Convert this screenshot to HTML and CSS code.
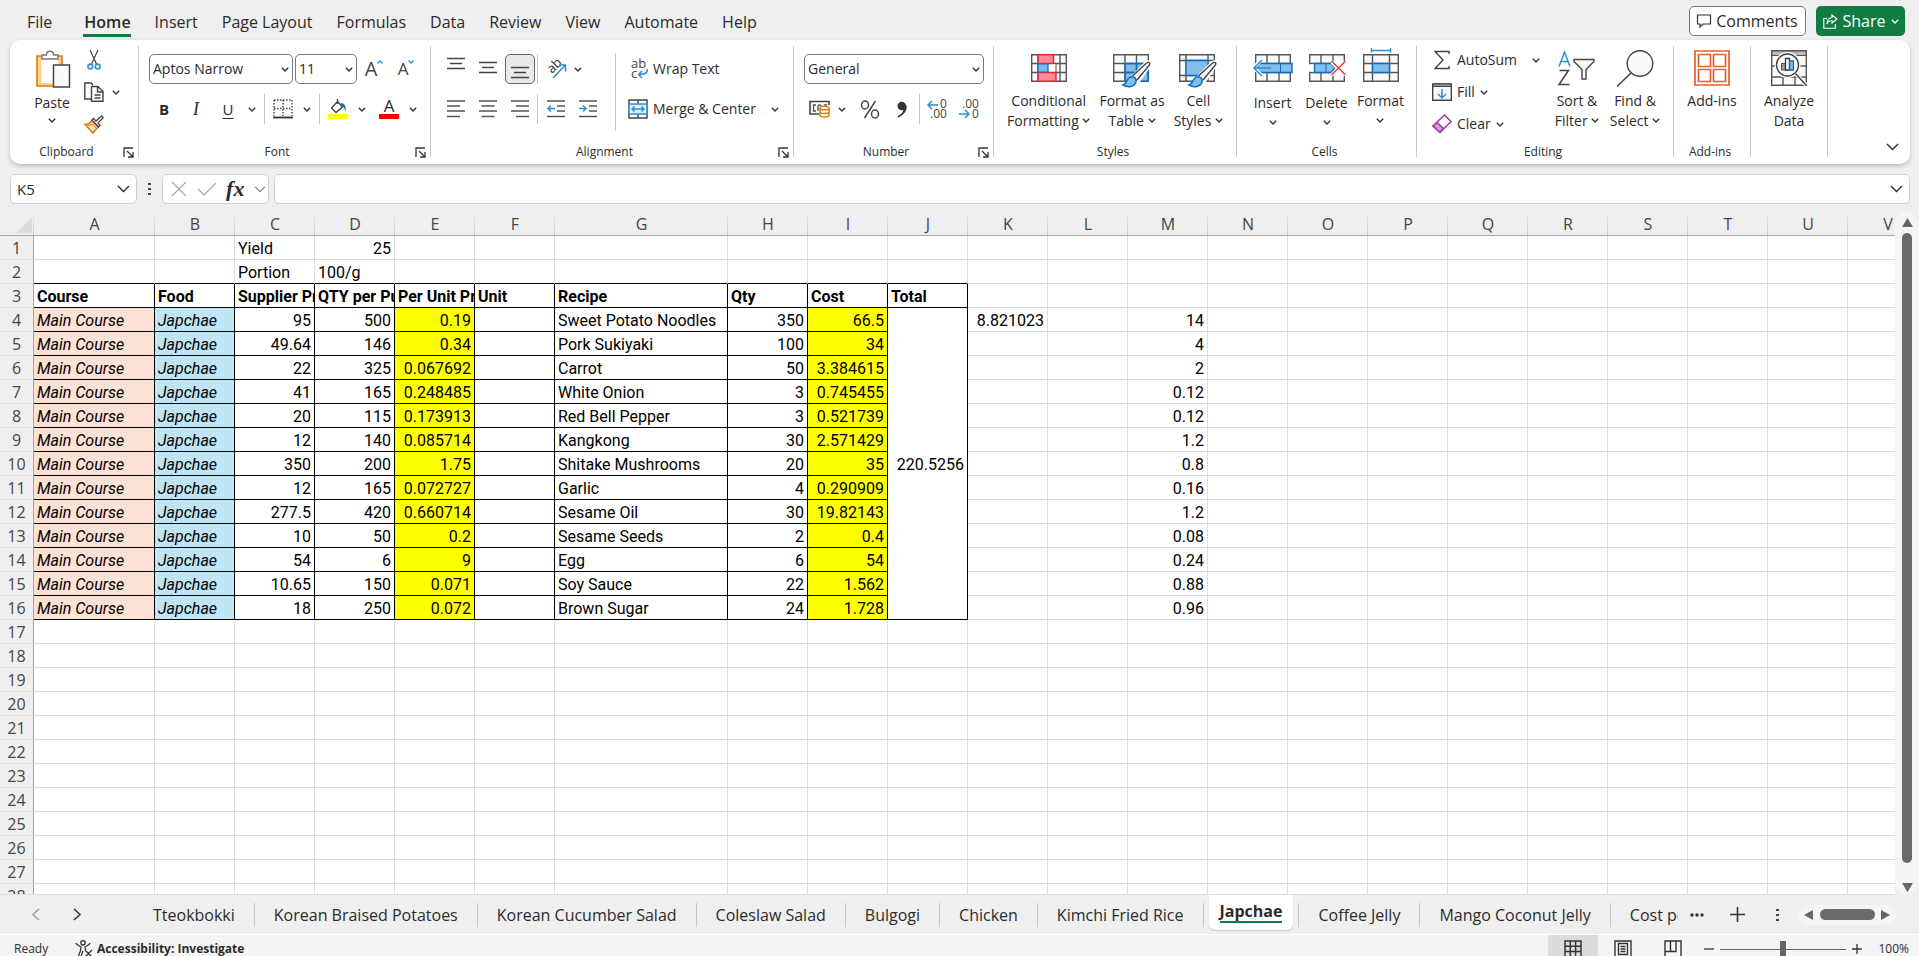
FILE: index.html
```
<!DOCTYPE html>
<html lang="en">
<head>
    <meta charset="utf-8">
    <title>Costing - Japchae</title>
    <link rel="stylesheet" href="styles.css">
</head>
<body>
    <!-- shared glyphs -->
    <svg class="defs" width="0" height="0">
        <symbol id="chev" viewBox="0 0 8 5"><path d="M.8.8 4 4 7.2.8" fill="none" stroke="#333" stroke-width="1.4"/></symbol>
        <symbol id="chev-big" viewBox="0 0 13 8"><path d="M1 1l5.5 5.5L12 1" fill="none" stroke="currentColor" stroke-width="1.4"/></symbol>
        <symbol id="launcher" viewBox="0 0 11 11"><path d="M1 10V1h9M4 4l5.5 5.5M10 5v5H5" fill="none" stroke="#333" stroke-width="1.3"/></symbol>
    </svg>

    <header class="menu">
        <nav class="menu-tabs">
            <button class="file">File</button>
            <button class="active">Home</button>
            <button>Insert</button>
            <button>Page Layout</button>
            <button>Formulas</button>
            <button>Data</button>
            <button>Review</button>
            <button>View</button>
            <button>Automate</button>
            <button>Help</button>
        </nav>
        <button class="comments">
            <svg width="14" height="14" viewBox="0 0 14 14"><path d="M.5 1h13v9H6l-3 3v-3H.5z" fill="none" stroke="#333" stroke-width="1.2"/></svg>
            Comments
        </button>
        <button class="share">
            <svg width="15" height="15" viewBox="0 0 15 15"><path d="M4 4.500H.8v9.700h11.500V10M9 1l5 4-5 4V6.500C6.500 6.500 5 7.500 4 10c0-4 2-6.500 5-6.500z" fill="none" stroke="#fff" stroke-width="1.1"/></svg>
            Share
            <svg width="8" height="5" viewBox="0 0 8 5"><path d="M.8.8 4 4 7.2.8" fill="none" stroke="#fff" stroke-width="1.3"/></svg>
        </button>
    </header>

    <section class="ribbon">
        <div class="group clipboard">
            <div class="body">
                <button class="big low">
                    <svg width="36" height="38" viewBox="0 0 36 38">
                        <path d="M3 6h25v30H3z" fill="#fbd38b" stroke="#e07b10" stroke-width="1.6"/><path d="M7 9h17v24H7z" fill="#fff"/>
                        <path d="M8 9V5h4.500c0-5 7-5 7 0H24v4z" fill="#fff" stroke="#777" stroke-width="1.4"/>
                        <path d="M19.500 15h16v22h-16z" fill="#fafafa" stroke="#444" stroke-width="1.5"/>
                    </svg>
                    <span>Paste</span>
                    <svg class="chev"><use href="#chev"/></svg>
                </button>
                <div class="stack">
                    <button aria-label="Cut"><svg width="14" height="20" viewBox="0 0 14 20"><path d="M3 0l6.500 14M11 0L4.500 14" stroke="#444" stroke-width="1.2"/><g fill="none" stroke="#2b8fd0" stroke-width="1.6"><circle cx="3.300" cy="16.500" r="2.400"/><circle cx="10.700" cy="16.500" r="2.400"/></g></svg></button>
                    <button aria-label="Copy"><svg width="20" height="20" viewBox="0 0 20 20"><path d="M7 17H.8V1H7l2 2M7.500 4.500H14l5 5v9.700H7.500zM13.500 5v5H19M10.500 13h6M10.500 16h6" fill="none" stroke="#444" stroke-width="1.4"/></svg><svg class="chev"><use href="#chev"/></svg></button>
                    <button aria-label="Format Painter"><svg width="20" height="19" viewBox="0 0 20 19"><path d="M1 9.500c3 0 5-1 7-4l6 6.500-5 6z" fill="#fde3c0" stroke="#e07b10" stroke-width="1.5"/><path d="M3.500 11l5-2 4 4.500" fill="none" stroke="#e07b10"/><path d="M8 5l1.500-1.500L12 6l5.500-5 1.700 1.700L14 8l2 2.500-1.500 1.500z" fill="#fff" stroke="#444" stroke-width="1.3"/></svg></button>
                </div>
            </div>
            <div class="caption"><span>Clipboard</span><svg class="launcher"><use href="#launcher"/></svg></div>
        </div>

        <div class="group font">
            <div class="rows">
                <div class="row">
                    <label class="combo wide"><select aria-label="Font"><option>Aptos Narrow</option></select><svg class="chev"><use href="#chev"/></svg></label>
                    <label class="combo size"><select aria-label="Font size"><option>11</option></select><svg class="chev"><use href="#chev"/></svg></label>
                    <button class="tool letter big-a">A<svg width="6" height="4" viewBox="0 0 6 4"><path d="M.5 3.500 3 1l2.500 2.500" fill="none" stroke="#2b8fd0" stroke-width="1.3"/></svg></button>
                    <button class="tool letter small-a">A<svg width="6" height="4" viewBox="0 0 6 4"><path d="M.5.5 3 3 5.500.5" fill="none" stroke="#2b8fd0" stroke-width="1.3"/></svg></button>
                </div>
                <div class="row">
                    <button class="tool bold">B</button>
                    <button class="tool italic">I</button>
                    <button class="tool underline">U</button>
                    <button class="drop" aria-label="Underline style"><svg class="chev"><use href="#chev"/></svg></button>
                    <i class="sep"></i>
                    <button class="tool" aria-label="Borders"><svg width="20" height="20" viewBox="0 0 20 20"><path d="M1 1h18M1 1v16M19 1v16M10 1v16M1 9.500h18" fill="none" stroke="#444" stroke-width="1.4" stroke-dasharray="1.500 1.500"/><path d="M0 18.500h20" stroke="#333" stroke-width="1.8"/></svg></button>
                    <button class="drop" aria-label="Border style"><svg class="chev"><use href="#chev"/></svg></button>
                    <i class="sep"></i>
                    <button class="tool" aria-label="Fill color"><svg width="20" height="20" viewBox="0 0 20 20"><path d="M9.500 2.500l5 5.500-6.500 5.500L3.500 9zM9.500 5V0" fill="#fafafa" stroke="#444" stroke-width="1.4"/><path d="M12.500 4c4 0 6 3 5 8.500-1.500-3-1-4.500-3-4.500z" fill="#1f6fb8"/><path d="M0 15h20v5H0z" fill="#ff0"/></svg></button>
                    <button class="drop" aria-label="Fill colors"><svg class="chev"><use href="#chev"/></svg></button>
                    <button class="tool font-color" aria-label="Font color"><span>A</span></button>
                    <button class="drop" aria-label="Font colors"><svg class="chev"><use href="#chev"/></svg></button>
                </div>
            </div>
            <div class="caption"><span>Font</span><svg class="launcher"><use href="#launcher"/></svg></div>
        </div>

        <div class="group alignment">
            <div class="split">
                <div class="rows">
                    <div class="row">
                        <button class="tool" aria-label="Top align"><svg width="18" height="24" viewBox="0 0 18 24"><path d="M0 1.500h18M3 6.500h12M0 11.500h18" stroke="#444" stroke-width="1.5"/></svg></button>
                        <button class="tool" aria-label="Middle align"><svg width="18" height="24" viewBox="0 0 18 24"><path d="M0 5.500h18M3 10.500h12M0 15.500h18" stroke="#444" stroke-width="1.5"/></svg></button>
                        <button class="tool pressed" aria-label="Bottom align"><svg width="18" height="24" viewBox="0 0 18 24"><path d="M0 10.500h18M3 15.500h12M0 20.500h18" stroke="#444" stroke-width="1.5"/></svg></button>
                        <i class="sep"></i>
                        <button class="tool" aria-label="Orientation"><svg width="20" height="20" viewBox="0 0 20 20"><text transform="translate(6 15) rotate(-45)" font-size="13" fill="#333">ab</text><path d="M7 19L19 6.500M13 6h6.500v6.500" fill="none" stroke="#2b8fd0" stroke-width="1.5"/></svg></button>
                        <button class="drop" aria-label="Orientation options"><svg class="chev"><use href="#chev"/></svg></button>
                    </div>
                    <div class="row">
                        <button class="tool" aria-label="Align left"><svg width="18" height="18" viewBox="0 0 18 18"><path d="M0 1h18M0 6h13M0 11h18M0 16.500h13" stroke="#555" stroke-width="1.6"/></svg></button>
                        <button class="tool" aria-label="Center"><svg width="18" height="18" viewBox="0 0 18 18"><path d="M0 1h18M2.500 6h13M0 11h18M2.500 16.500h13" stroke="#555" stroke-width="1.6"/></svg></button>
                        <button class="tool" aria-label="Align right"><svg width="18" height="18" viewBox="0 0 18 18"><path d="M0 1h18M5 6h13M0 11h18M5 16.500h13" stroke="#555" stroke-width="1.6"/></svg></button>
                        <i class="sep"></i>
                        <button class="tool" aria-label="Decrease indent"><svg width="18" height="18" viewBox="0 0 18 18"><path d="M0 1h18M10 6h8M10 11h8M0 16.500h18" stroke="#555" stroke-width="1.6"/><path d="M8 8.500H1M4 5.500l-3 3 3 3" fill="none" stroke="#2b8fd0" stroke-width="1.5"/></svg></button>
                        <button class="tool" aria-label="Increase indent"><svg width="18" height="18" viewBox="0 0 18 18"><path d="M0 1h18M10 6h8M10 11h8M0 16.500h18" stroke="#555" stroke-width="1.6"/><path d="M0 8.500h7M4 5.500l3 3-3 3" fill="none" stroke="#2b8fd0" stroke-width="1.5"/></svg></button>
                    </div>
                </div>
                <i class="sep tall"></i>
                <div class="rows">
                    <div class="row">
                        <button class="text-tool"><svg width="20" height="20" viewBox="0 0 20 20"><text x="3" y="9" font-size="13" fill="#444">ab</text><text x="3" y="19" font-size="13" fill="#444">c</text><path d="M19 10c1 4-2 5.500-8 5.500M14 12l-3.500 3.500L14 19" fill="none" stroke="#2b8fd0" stroke-width="1.5"/></svg>Wrap Text</button>
                    </div>
                    <div class="row">
                        <button class="text-tool"><svg width="20" height="20" viewBox="0 0 20 20"><path d="M1 1h18v18H1zM10 1v4M10 15v4" fill="none" stroke="#444" stroke-width="1.5"/><path d="M1 5h18v10H1z" fill="#dceefb" stroke="#2b8fd0" stroke-width="1.5"/><path d="M4 10h12M6.500 7.500L4 10l2.500 2.500M13.500 7.500L16 10l-2.500 2.500" fill="none" stroke="#2b8fd0" stroke-width="1.4"/></svg>Merge &amp; Center</button>
                        <button class="drop merge-drop" aria-label="Merge options"><svg class="chev"><use href="#chev"/></svg></button>
                    </div>
                </div>
            </div>
            <div class="caption"><span>Alignment</span><svg class="launcher"><use href="#launcher"/></svg></div>
        </div>

        <div class="group number">
            <div class="rows">
                <div class="row">
                    <label class="combo full"><select aria-label="Number format"><option>General</option></select><svg class="chev"><use href="#chev"/></svg></label>
                </div>
                <div class="row">
                    <button class="tool" aria-label="Accounting format"><svg width="21" height="18" viewBox="0 0 21 18"><path d="M10 14H1V1.500h19V5" fill="none" stroke="#444" stroke-width="1.6"/><path d="M7 5H4.500v6H7M9 11V6.500C9 4.500 12 4.500 12 6.500M15 5h3" fill="none" stroke="#555" stroke-width="1.4"/><path d="M11 8v7.500c0 2 9 2 9 0V8" fill="#fff" stroke="#e07b10" stroke-width="1.5"/><ellipse cx="15.500" cy="8" rx="4.500" ry="1.800" fill="#fff" stroke="#e07b10" stroke-width="1.5"/><path d="M11 12c0 2 9 2 9 0" fill="none" stroke="#e07b10" stroke-width="1.4"/></svg></button>
                    <button class="drop" aria-label="Accounting options"><svg class="chev"><use href="#chev"/></svg></button>
                    <button class="tool" aria-label="Percent style"><svg width="20" height="19" viewBox="0 0 20 19"><g fill="none" stroke="#444" stroke-width="1.5"><ellipse cx="5" cy="5" rx="3.500" ry="4"/><ellipse cx="15" cy="14" rx="3.500" ry="4"/><path d="M15.500 1l-11 17"/></g></svg></button>
                    <button class="tool" aria-label="Comma style"><svg width="10" height="17" viewBox="0 0 10 17"><circle cx="4.800" cy="5" r="4.300" fill="#333"/><path d="M9 4.500c.5 6-3 9-8 11.500" fill="none" stroke="#333" stroke-width="1.5"/><path d="M9.100 5c0 4-2 8-7 10 3-2.500 4-4 4-6z" fill="#333"/></svg></button>
                    <i class="sep"></i>
                    <button class="tool" aria-label="Increase decimal"><svg width="20" height="20" viewBox="0 0 20 20"><path d="M11 6H1M5 2L1 6l4 4" fill="none" stroke="#2b8fd0" stroke-width="1.5"/><text x="13" y="9" font-size="12" fill="#444">0</text><text x="3" y="19" font-size="12" fill="#444">.00</text></svg></button>
                    <button class="tool" aria-label="Decrease decimal"><svg width="20" height="20" viewBox="0 0 20 20"><path d="M0 15h10M6 11l4 4-4 4" fill="none" stroke="#2b8fd0" stroke-width="1.5"/><text x="3" y="9" font-size="12" fill="#444">.00</text><text x="13" y="19" font-size="12" fill="#444">0</text></svg></button>
                </div>
            </div>
            <div class="caption"><span>Number</span><svg class="launcher"><use href="#launcher"/></svg></div>
        </div>

        <div class="group styles">
            <div class="body">
                <button class="big">
                    <svg width="36" height="38" viewBox="0 0 36 38"><path d="M.7 4.700h34.600v26.600H.7zM.7 13.500h34.600M.7 22.500h34.600M7 4.700v26.600M29 4.700v26.600" fill="#fafafa" stroke="#555" stroke-width="1.4"/><path d="M18 13.500h7v9h-7" fill="#fff" stroke="#555"/><path d="M7 4.700h15.500v8.800H7zM7 22.500h18v8.800H7z" fill="#ff8a8f" stroke="#e0262c" stroke-width="1.4"/><path d="M7 14h10v8H7z" fill="#7ab8ea" stroke="#0f6cbd" stroke-width="1.2"/></svg>
                    <span>Conditional<br>Formatting <svg class="chev"><use href="#chev"/></svg></span>
                </button>
                <button class="big">
                    <svg width="38" height="38" viewBox="0 0 38 38"><path d="M.7 4.700h34.600v26.600H.7z" fill="#fafafa"/><path d="M12 13.500h23.300v17.800H12z" fill="#83bdec"/><path d="M.7 4.700h34.600v26.600H.7zM.7 13.500h34.600M.7 22.500h34.600M12 4.700v26.600M23.500 4.700v26.600" fill="none" stroke="#555" stroke-width="1.4"/><path d="M12 13.500h23.300v17.800H12zM12 22.500h23.300M23.500 13.500v17.800" fill="none" stroke="#0f6cbd" stroke-width="1.3"/><path d="M20 27L33 13.500c3-2.500 5-1 3 2L25 31z" fill="#fff" stroke="#fff" stroke-width="4"/><path d="M19.500 26L33 13.500c3-2 5-1 3 2L24 30" fill="#fff" stroke="#444" stroke-width="1.4"/><path d="M10 35c4-1 3-5 6-7 4-3 8 0 7 4-1.500 5-8 6-13 3z" fill="#83bdec" stroke="#0f6cbd" stroke-width="1.5"/></svg>
                    <span>Format as<br>Table <svg class="chev"><use href="#chev"/></svg></span>
                </button>
                <button class="big">
                    <svg width="38" height="38" viewBox="0 0 38 38"><path d="M.7 4.700h34.600v26.600H.7zM.7 10.500h34.600M.7 25.500h34.600M7 4.700v26.600M29 4.700v26.600" fill="#fafafa" stroke="#555" stroke-width="1.4"/><path d="M7 10.500h22v15H7z" fill="#83bdec" stroke="#0f6cbd" stroke-width="1.3"/><path d="M20 27L33 13.500c3-2.500 5-1 3 2L25 31z" fill="#fff" stroke="#fff" stroke-width="4"/><path d="M19.500 26L33 13.500c3-2 5-1 3 2L24 30" fill="#fff" stroke="#444" stroke-width="1.4"/><path d="M10 35c4-1 3-5 6-7 4-3 8 0 7 4-1.500 5-8 6-13 3z" fill="#83bdec" stroke="#0f6cbd" stroke-width="1.5"/></svg>
                    <span>Cell<br>Styles <svg class="chev"><use href="#chev"/></svg></span>
                </button>
            </div>
            <div class="caption"><span>Styles</span></div>
        </div>

        <div class="group cells">
            <div class="body">
                <button class="big low">
                    <svg width="40" height="38" viewBox="0 0 40 38"><path d="M2.700 4.700h34.600v26.600H2.700zM2.700 13.500h34.600M2.700 22.500h34.600M14 4.700v26.600M26 4.700v26.600" fill="#fafafa" stroke="#555" stroke-width="1.4"/><path d="M5 13.500h34v9H5z" fill="#83bdec" stroke="#0f6cbd" stroke-width="1.4"/><path d="M27.500 13.500v9" stroke="#0f6cbd"/><path d="M9 9L1 17.500 9 26" fill="none" stroke="#fff" stroke-width="4"/><path d="M18 18H1M9 10L1 18l8 8" fill="none" stroke="#2b8fd0" stroke-width="1.5"/></svg>
                    <span>Insert<br><svg class="chev"><use href="#chev"/></svg></span>
                </button>
                <button class="big low">
                    <svg width="40" height="38" viewBox="0 0 40 38"><path d="M2.700 4.700h34.600v26.600H2.700zM2.700 13.500h34.600M2.700 22.500h34.600M14 4.700v26.600M26 4.700v26.600" fill="#fafafa" stroke="#555" stroke-width="1.4"/><path d="M0 14.200h6.500v7.600H0zM28 11h12v15H28z" fill="#fff"/><path d="M7.500 13.500H24l4 4.500-4 4.500H7.500z" fill="#83bdec" stroke="#0f6cbd" stroke-width="1.4"/><path d="M19 13.500v9" stroke="#0f6cbd"/><path d="M25 12l13 13M38 12L25 25" stroke="#fff" stroke-width="4"/><path d="M24.500 11l14 14M38.500 11l-14 14" stroke="#ee4247" stroke-width="1.6"/></svg>
                    <span>Delete<br><svg class="chev"><use href="#chev"/></svg></span>
                </button>
                <button class="big">
                    <svg width="36" height="38" viewBox="0 0 36 38"><path d="M.7 4.700h34.600v26.600H.7zM.7 13.500h34.600M.7 22.500h34.600M9.500 4.700v26.600M26.500 4.700v26.600" fill="#fafafa" stroke="#555" stroke-width="1.4"/><path d="M9.500 13.500h17v9h-17z" fill="#83bdec" stroke="#0f6cbd" stroke-width="1.4"/><path d="M8.500.5h19M8.500-2v4.500M27.500-2v4.500" stroke="#2b8fd0" stroke-width="1.5"/></svg>
                    <span>Format<br><svg class="chev"><use href="#chev"/></svg></span>
                </button>
            </div>
            <div class="caption"><span>Cells</span></div>
        </div>

        <div class="group editing">
            <div class="body">
                <div class="stack">
                    <button><svg width="20" height="20" viewBox="0 0 20 20"><path d="M17 4V1.500H3L11 10l-8 8.500h14V16" fill="none" stroke="#444" stroke-width="1.4"/></svg>AutoSum<svg class="chev far"><use href="#chev"/></svg></button>
                    <button><svg width="20" height="20" viewBox="0 0 20 20"><path d="M.7 2h18.600v16.300H.7z" fill="#fafafa" stroke="#444" stroke-width="1.4"/><path d="M1 2h18v2.500H1z" fill="#999" stroke="#444"/><path d="M10 7v9M6 12l4 4 4-4" fill="none" stroke="#2b8fd0" stroke-width="1.5"/></svg>Fill<svg class="chev"><use href="#chev"/></svg></button>
                    <button><svg width="20" height="20" viewBox="0 0 20 20"><path d="M12.500 1l6.500 6.500L8 18.500 1 12z" fill="#fff" stroke="#9b3ba6" stroke-width="1.5"/><path d="M5 8.500L1 12l7 6.500 3.500-4z" fill="#d796dd" stroke="#9b3ba6" stroke-width="1.5"/></svg>Clear<svg class="chev"><use href="#chev"/></svg></button>
                </div>
                <button class="big">
                    <svg width="38" height="38" viewBox="0 0 38 38"><path d="M1 16.500L6.500 2 12 16.500M3 11.500h7" fill="none" stroke="#2b8fd0" stroke-width="1.5"/><path d="M1.500 20.500h9L1 34.500h10.500" fill="none" stroke="#444" stroke-width="1.5"/><path d="M16 9.500h20v2l-8 8V29h-4v-9.500l-8-8z" fill="#fafafa" stroke="#444" stroke-width="1.4"/></svg>
                    <span>Sort &amp;<br>Filter <svg class="chev"><use href="#chev"/></svg></span>
                </button>
                <button class="big">
                    <svg width="38" height="38" viewBox="0 0 38 38"><circle cx="24" cy="13.500" r="12.800" fill="#fafafa" stroke="#444" stroke-width="1.4"/><path d="M15 23L1 36.500" stroke="#444" stroke-width="1.5"/></svg>
                    <span>Find &amp;<br>Select <svg class="chev"><use href="#chev"/></svg></span>
                </button>
            </div>
            <div class="caption"><span>Editing</span></div>
        </div>

        <div class="group narrow">
            <div class="body">
                <button class="big">
                    <svg width="36" height="38" viewBox="0 0 36 38"><path d="M1 1h34v34H1zM4.500 4.500h12v12h-12zM19.500 4.500h12v12h-12zM4.500 19.500h12v12h-12zM19.500 19.500h12v12h-12z" fill="#fff" stroke="#e2602f" stroke-width="1.7"/></svg>
                    <span>Add-ins</span>
                </button>
            </div>
            <div class="caption"><span>Add-ins</span></div>
        </div>

        <div class="group narrow">
            <div class="body">
                <button class="big">
                    <svg width="36" height="38" viewBox="0 0 36 38"><path d="M.7.7h34.600v34.600H.7zM.7 16h34.600M.7 27h34.600M12 27v8M24 27v8" fill="#fafafa" stroke="#555" stroke-width="1.4"/><path d="M1 1h34v4.500H1z" fill="#bbb" stroke="#555"/><circle cx="16.500" cy="15" r="13" fill="#fff"/><circle cx="16.500" cy="15" r="11" fill="#fff" stroke="#444" stroke-width="1.4"/><path d="M24.500 23.500L35 35" stroke="#fff" stroke-width="4"/><path d="M24.500 23.500L35 35" stroke="#444" stroke-width="1.5"/><path d="M10.500 13.500h4V20h-4z" fill="#999" stroke="#555"/><path d="M14.500 8.500h4V20h-4z" fill="#fff" stroke="#333" stroke-width="1.3"/><path d="M18.500 11h4v9h-4z" fill="#7ab8ea" stroke="#0f6cbd" stroke-width="1.3"/></svg>
                    <span>Analyze<br>Data</span>
                </button>
            </div>
        </div>
        <button class="collapse" aria-label="Collapse ribbon"><svg width="13" height="8"><use href="#chev-big"/></svg></button>
    </section>

    <section class="formula-bar">
        <div class="box name-box"><input value="K5" aria-label="Name box"><svg width="13" height="8"><use href="#chev-big"/></svg></div>
        <svg class="dots" width="3" height="14" viewBox="0 0 3 14"><path d="M0 1h3v2H0zM0 6h3v2H0zM0 11h3v2H0z" fill="#444"/></svg>
        <div class="box fx-box">
            <button aria-label="Cancel"><svg width="16" height="16" viewBox="0 0 16 16"><path d="M1 1l14 14M15 1L1 15" stroke="#aaa" stroke-width="1.3"/></svg></button>
            <button aria-label="Enter"><svg width="20" height="14" viewBox="0 0 20 14"><path d="M1 7l6 6L19 1" fill="none" stroke="#aaa" stroke-width="1.3"/></svg></button>
            <button class="fx">fx</button>
            <svg class="muted" width="12" height="7"><use href="#chev-big"/></svg>
        </div>
        <div class="box formula"><input aria-label="Formula"><svg width="13" height="8"><use href="#chev-big"/></svg></div>
    </section>

    <main class="sheet">
        <div class="grid"><table id="grid"></table></div>
        <div class="vscroll">
            <svg width="11" height="9" viewBox="0 0 11 9"><path d="M5.500 0L11 9H0z" fill="#666"/></svg>
            <div class="thumb"></div>
            <svg width="11" height="9" viewBox="0 0 11 9"><path d="M0 0h11L5.500 9z" fill="#666"/></svg>
        </div>
    </main>

    <nav class="sheet-bar">
        <div class="arrows">
            <button aria-label="Previous sheet"><svg width="8" height="13" viewBox="0 0 8 13"><path d="M7 1L1 6.500 7 12" fill="none" stroke="#999" stroke-width="1.4"/></svg></button>
            <button aria-label="Next sheet"><svg width="8" height="13" viewBox="0 0 8 13"><path d="M1 1l6 5.500L1 12" fill="none" stroke="#333" stroke-width="1.5"/></svg></button>
        </div>
        <div class="sheet-tabs">
            <button>Tteokbokki</button>
            <button>Korean Braised Potatoes</button>
            <button>Korean Cucumber Salad</button>
            <button>Coleslaw Salad</button>
            <button>Bulgogi</button>
            <button>Chicken</button>
            <button>Kimchi Fried Rice</button>
            <button class="current"><span>Japchae</span></button>
            <button class="after">Coffee Jelly</button>
            <button>Mango Coconut Jelly</button>
            <button>Cost per</button>
        </div>
        <div class="sheet-tools">
            <button aria-label="More sheets"><svg width="14" height="4" viewBox="0 0 14 4"><g fill="#333"><circle cx="2" cy="2" r="1.700"/><circle cx="7" cy="2" r="1.700"/><circle cx="12" cy="2" r="1.700"/></g></svg></button>
            <button aria-label="New sheet"><svg width="15" height="15" viewBox="0 0 15 15"><path d="M7.500 0v15M0 7.500h15" stroke="#333" stroke-width="1.6"/></svg></button>
            <svg class="dots" width="3" height="14" viewBox="0 0 3 14"><path d="M0 1h3v2H0zM0 6h3v2H0zM0 11h3v2H0z" fill="#444"/></svg>
        </div>
        <div class="hscroll">
            <svg width="9" height="10" viewBox="0 0 9 10"><path d="M9 0v10L0 5z" fill="#666"/></svg>
            <div class="thumb"></div>
            <svg width="9" height="10" viewBox="0 0 9 10"><path d="M0 0l9 5-9 5z" fill="#666"/></svg>
        </div>
    </nav>

    <footer class="status">
        <span class="ready">Ready</span>
        <button class="access">
            <svg width="18" height="18" viewBox="0 0 18 18"><g fill="none" stroke="#333" stroke-width="1.3"><circle cx="8" cy="2.800" r="2.200"/><path d="M1 3c0 2 4 3 5 4 0 3-1 6-3 10M15 3c0 2-4 3-5 4 0 1 0 2 1 3M6 16l2-5M10 10l7 7M17 10l-7 7"/></g></svg>
            Accessibility: Investigate
        </button>
        <div class="views">
            <button class="on" aria-label="Normal view"><svg width="18" height="18" viewBox="0 0 18 18"><path d="M1 1h16v16H1zM1 6.300h16M1 11.600h16M6.300 1v16M11.600 1v16" fill="none" stroke="#333" stroke-width="1.5"/></svg></button>
            <button aria-label="Page layout view"><svg width="18" height="18" viewBox="0 0 18 18"><path d="M1 1h16v16H1zM4.500 3.500h9v11h-9zM6.500 6.500h5M6.500 9h5M6.500 11.500h5" fill="none" stroke="#333" stroke-width="1.4"/></svg></button>
            <button aria-label="Page break view"><svg width="18" height="18" viewBox="0 0 18 18"><path d="M1 1h16v16H1zM1 11.500h11V1M6.500 1v10" fill="none" stroke="#333" stroke-width="1.4"/></svg></button>
        </div>
        <div class="zoom">
            <button aria-label="Zoom out"><svg width="10" height="10" viewBox="0 0 10 10"><path d="M0 5h10" stroke="#333" stroke-width="1.3"/></svg></button>
            <input type="range" min="0" max="100" value="50" aria-label="Zoom">
            <button aria-label="Zoom in"><svg width="10" height="10" viewBox="0 0 10 10"><path d="M0 5h10M5 0v10" stroke="#333" stroke-width="1.3"/></svg></button>
            <span>100%</span>
        </div>
    </footer>

    <script src="script.js"></script>
</body>
</html>
```
FILE: styles.css
```
:root {
    --bg: #efefef;
    --line: #c8c8c8;
    --grid: #dedede;
    --text: #2b2b2b;
    --green: #107c41;
    --ui: "Open Sans", "Noto Sans", sans-serif;
    --cell: Roboto, "Liberation Sans", sans-serif;
}

* {
    box-sizing: border-box;
}

body {
    margin: 0;
    height: 100vh;
    overflow: hidden;
    display: flex;
    flex-direction: column;
    background: var(--bg);
    color: var(--text);
    font: 14px/20px var(--ui);
}

button,
input,
select {
    font: inherit;
    color: inherit;
    background: none;
    border: none;
    padding: 0;
    margin: 0;
    white-space: nowrap;
}

svg {
    flex: none;
    overflow: visible;
}

.defs {
    position: absolute;
}

.chev {
    width: 8px;
    height: 5px;
}

/* menu row */
.menu {
    display: flex;
    align-items: center;
    height: 40px;
    padding: 2px 14px 0 15px;
    flex: none;
}

.menu-tabs {
    display: flex;
    flex: 1;
    height: 38px;
}

.menu-tabs button {
    padding: 2px 12px 0;
    font-size: 16px;
}

.menu-tabs .file {
    margin-right: 8px;
}

.menu-tabs .active {
    font-weight: 600;
    background: linear-gradient(var(--green), var(--green)) 50% 32px / 48px 3px no-repeat;
}

.comments,
.share {
    display: flex;
    align-items: center;
    justify-content: center;
    gap: 5px;
    height: 30px;
    border-radius: 5px;
    font-size: 16px;
}

.comments {
    width: 117px;
    border: 1px solid #777;
    background: #fff;
    margin-right: 10px;
}

.share {
    width: 89px;
    background: var(--green);
    color: #fff;
}

/* ribbon */
.ribbon {
    display: flex;
    flex: none;
    height: 124px;
    margin: 0 9px 0 10px;
    background: #fff;
    border-radius: 10px;
    box-shadow: 0 2px 4px rgba(0, 0, 0, .22);
}

.group {
    display: flex;
    flex-direction: column;
    justify-content: space-between;
    height: 111px;
    margin-top: 6px;
    border-right: 1px solid var(--line);
    flex: none;
}

.clipboard { width: 129px; }
.font { width: 292px; }
.alignment { width: 363px; }
.number { width: 200px; }
.styles { width: 243px; }
.cells { width: 180px; }
.editing { width: 257px; }
.narrow { width: 77px; }

.caption {
    display: flex;
    align-items: center;
    height: 10px;
    padding-right: 4px;
    font-size: 12px;
    line-height: 16px;
}

.caption span {
    flex: 1;
    text-align: center;
}

.launcher {
    width: 11px;
    height: 11px;
}

.body {
    display: flex;
    justify-content: center;
    padding-top: 4px;
}

.big {
    display: flex;
    flex-direction: column;
    align-items: center;
    gap: 3px;
}

.low {
    gap: 5px;
}

.big span .chev {
    vertical-align: 3px;
}

.clipboard .body {
    justify-content: flex-start;
    padding-left: 16px;
    gap: 6px;
}

.clipboard .big {
    width: 52px;
}

.stack {
    display: flex;
    flex-direction: column;
}

.stack button {
    display: flex;
    align-items: center;
    height: 32px;
}

.clipboard .stack {
    width: 44px;
    margin-top: -6px;
}

.clipboard .stack button {
    gap: 8px;
}

.clipboard .stack button:first-child {
    padding-left: 3px;
}

.rows {
    display: flex;
    flex-direction: column;
    gap: 10px;
    padding: 8px 0 0 10px;
}

.row {
    display: flex;
    align-items: center;
    height: 30px;
}

.tool {
    display: flex;
    align-items: center;
    justify-content: center;
    width: 30px;
    height: 30px;
    margin-right: 2px;
    border-radius: 5px;
}

.drop {
    display: flex;
    align-items: center;
    justify-content: center;
    width: 14px;
    height: 30px;
}

.pressed {
    background: #e8e8e8;
    border: 1px solid #666;
}

.sep {
    width: 1px;
    height: 30px;
    margin-right: 3px;
    background: var(--line);
}

.sep.tall {
    height: 78px;
    margin: 7px 0 0 10px;
}

.split {
    display: flex;
}

.combo {
    display: grid;
    align-items: center;
    height: 30px;
    border: 1px solid #777;
    border-radius: 5px;
}

.combo select,
.combo svg {
    grid-area: 1 / 1;
}

.combo select {
    appearance: none;
    padding-left: 3px;
}

.combo svg {
    justify-self: end;
    margin-right: 3px;
    pointer-events: none;
}

.wide {
    width: 144px;
    margin-right: 2px;
}

.size {
    width: 62px;
    margin-right: 2px;
}

.full {
    width: 180px;
}

.letter {
    color: #444;
}

.letter svg {
    margin-bottom: 14px;
}

.big-a { font-size: 20px; }
.small-a { font-size: 17px; }
.bold { font-weight: 700; font-size: 15px; }
.italic { font: italic 18px "Liberation Serif", serif; }
.underline { text-decoration: underline; text-underline-offset: 3px; font-size: 15px; }

.font .drop {
    margin-right: 5px;
}

.font-color span {
    width: 20px;
    height: 20px;
    border-bottom: 5px solid #f00;
    font-size: 17px;
    line-height: 14px;
}

.alignment .rows + .sep + .rows {
    padding-left: 12px;
}

.alignment .tool + .drop {
    width: 10px;
}

.text-tool {
    display: flex;
    align-items: center;
    gap: 5px;
}

.merge-drop {
    margin-left: 12px;
}

.number .drop {
    width: 12px;
    margin-right: 7px;
}

.number .sep {
    margin-right: 2px;
}

.styles .body {
    gap: 9px;
}

.cells .big {
    width: 54px;
}

.editing .body {
    justify-content: flex-start;
    padding-left: 15px;
}

.editing .stack {
    width: 116px;
    margin-top: -6px;
}

.editing .stack button {
    gap: 5px;
}

.editing .stack .far {
    margin-left: 10px;
}

.editing .big {
    width: 58px;
}

.collapse {
    margin: auto 11px 13px auto;
    display: flex;
}

/* formula bar */
.formula-bar {
    display: flex;
    align-items: center;
    flex: none;
    height: 30px;
    margin: 10px 9px 8px 10px;
}

.box {
    display: flex;
    align-items: center;
    height: 30px;
    padding-right: 6px;
    background: #fff;
    border: 1px solid #d0d0d0;
    border-radius: 5px;
}

.name-box {
    width: 127px;
}

.box input {
    flex: 1;
    min-width: 0;
    padding-left: 6px;
    font-size: 15px;
    outline: none;
}

.formula-bar .dots {
    margin: 0 11px;
}

.fx-box {
    width: 107px;
    margin-right: 5px;
    padding: 0 2px 0 8px;
    justify-content: space-between;
}

.fx-box button {
    display: flex;
}

.fx-box .fx {
    font: italic bold 22px/28px "Liberation Serif", serif;
}

.muted {
    color: #888;
}

.formula {
    flex: 1;
}

/* grid */
.sheet {
    display: flex;
    flex: 1;
    min-height: 0;
}

.grid {
    flex: 1;
    min-width: 0;
    overflow: hidden;
    background: #fff;
    border-bottom: 1px solid var(--grid);
}

table {
    table-layout: fixed;
    border-collapse: separate;
    border-spacing: 0;
    width: 1928px;
    font: 16px/20px var(--cell);
    color: #000;
}

th,
td {
    height: 24px;
    padding: 3px 3px 0;
    overflow: hidden;
    white-space: nowrap;
    border-right: 1px solid var(--grid);
    border-bottom: 1px solid var(--grid);
}

thead th,
tbody th {
    font: 16px/22px var(--ui);
    color: #444;
    padding: 1px 0 0;
    background: var(--bg);
}

thead th {
    padding: 0;
    border-right: none;
    border-bottom: 1px solid #a6a6a6;
    background: linear-gradient(transparent, var(--line)) right / 1px 100% no-repeat var(--bg);
}

tbody th {
    border-right: 1px solid #a6a6a6;
}

thead svg {
    display: block;
    margin: 2px 2px 0 auto;
}

.col-head { width: 34px; }
.col-a { width: 121px; }
.col { width: 80px; }
.col-g { width: 173px; }

.num {
    text-align: right;
}

.edge {
    border-bottom-color: #000;
}

.framed {
    border-right-color: #000;
    border-bottom-color: #000;
}

.title {
    font-weight: 700;
}

.course {
    background: #fbe2d5;
    font-style: italic;
}

.food {
    background: #c0e6f5;
    font-style: italic;
}

.calc {
    background: #ff0;
}

.vscroll {
    display: flex;
    flex-direction: column;
    align-items: center;
    justify-content: space-between;
    width: 24px;
    padding: 6px 0 3px;
    background: #f5f5f5;
    border-radius: 12px;
}

.thumb {
    background: #6a6a6a;
    border-radius: 6px;
}

.vscroll .thumb {
    flex: 1;
    width: 10px;
    margin: 6px 0 20px;
}

/* sheet tabs */
.sheet-bar {
    display: flex;
    align-items: center;
    flex: none;
    height: 40px;
    border-bottom: 1px solid #fff;
}

.sheet-bar button {
    font-size: 16px;
}

.arrows {
    display: flex;
    gap: 33px;
    width: 134px;
    padding-left: 32px;
}

.sheet-tabs {
    display: flex;
    align-items: center;
    flex: 1;
    min-width: 0;
    height: 40px;
    overflow: hidden;
}

.sheet-tabs button {
    flex: none;
    height: 24px;
    padding: 0 19px;
    border-right: 1px solid var(--line);
}

.sheet-tabs .current {
    align-self: flex-start;
    height: 35px;
    margin: 0 5px;
    padding: 0 11px;
    background: #fff;
    border: none;
    border-radius: 0 0 6px 6px;
    box-shadow: 0 1px 1px var(--line);
    font-weight: 700;
}

.current span {
    display: block;
    border-bottom: 2px solid var(--green);
}

.sheet-tabs .after {
    border-left: 1px solid var(--line);
}

.sheet-tools {
    display: flex;
    align-items: center;
    gap: 26px;
    margin: 0 19px 0 12px;
}

.sheet-tools button {
    display: flex;
}

.sheet-tools .dots {
    margin-left: 5px;
}

.hscroll {
    display: flex;
    align-items: center;
    justify-content: space-between;
    width: 98px;
    height: 20px;
    padding: 0 6px;
    margin-right: 23px;
    border-radius: 10px;
    background: #f5f5f5;
}

.hscroll .thumb {
    width: 55px;
    height: 11px;
}

/* status bar */
.status {
    display: flex;
    align-items: flex-start;
    flex: none;
    height: 21px;
    overflow: hidden;
    background: #f4f4f4;
    font-size: 12px;
    line-height: 28px;
}

.ready {
    width: 61px;
    margin-left: 14px;
}

.access {
    display: flex;
    align-items: center;
    gap: 4px;
    flex: 1;
    height: 28px;
    font-weight: 700;
}

.views {
    display: flex;
}

.views button {
    display: flex;
    align-items: center;
    justify-content: center;
    width: 50px;
    height: 27px;
}

.views .on {
    background: #dcdcdc;
}

.zoom {
    display: flex;
    align-items: center;
    gap: 6px;
    height: 28px;
    margin: 0 10px 0 6px;
}

.zoom button {
    display: flex;
}

.zoom span {
    margin-left: 10px;
}

.zoom input {
    appearance: none;
    width: 126px;
    height: 16px;
    background: linear-gradient(#666, #666) center / 100% 1px no-repeat;
}

.zoom input::-webkit-slider-thumb {
    appearance: none;
    width: 6px;
    height: 16px;
    background: #666;
}
```
FILE: script.js
```
const
    table = document.getElementById("grid"),
    letters = "ABCDEFGHIJKLMNOPQRSTUV".split(""),
    rowCount = 28,
    firstItem = 4;

// supplier price, qty per purchase, per unit, recipe, qty, cost, column M
const items = [
    [95, 500, 0.19, "Sweet Potato Noodles", 350, 66.5, 14],
    [49.64, 146, 0.34, "Pork Sukiyaki", 100, 34, 4],
    [22, 325, 0.067692, "Carrot", 50, 3.384615, 2],
    [41, 165, 0.248485, "White Onion", 3, 0.745455, 0.12],
    [20, 115, 0.173913, "Red Bell Pepper", 3, 0.521739, 0.12],
    [12, 140, 0.085714, "Kangkong", 30, 2.571429, 1.2],
    [350, 200, 1.75, "Shitake Mushrooms", 20, 35, 0.8],
    [12, 165, 0.072727, "Garlic", 4, 0.290909, 0.16],
    [277.5, 420, 0.660714, "Sesame Oil", 30, 19.82143, 1.2],
    [10, 50, 0.2, "Sesame Seeds", 2, 0.4, 0.08],
    [54, 6, 9, "Egg", 6, 54, 0.24],
    [10.65, 150, 0.071, "Soy Sauce", 22, 1.562, 0.88],
    [18, 250, 0.072, "Brown Sugar", 24, 1.728, 0.96]
];
const lastItem = firstItem + items.length - 1;

const cells = {
    C1: "Yield", D1: 25, C2: "Portion", D2: "100/g",
    A3: "Course", B3: "Food", C3: "Supplier Price", D3: "QTY per Purchase",
    E3: "Per Unit Price", F3: "Unit", G3: "Recipe", H3: "Qty", I3: "Cost", J3: "Total",
    J4: 220.5256, K4: 8.821023
};

items.forEach((item, i) => {
    let r = firstItem + i;
    cells["A" + r] = "Main Course";
    cells["B" + r] = "Japchae";
    ["C", "D", "E", "G", "H", "I", "M"].forEach((col, c) => cells[col + r] = item[c]);
});

function classesFor(col, row) {
    let list = [];
    let value = cells[col + row];

    if (typeof value == "number") list.push("num");
    if (col <= "J" && row == 2) list.push("edge");
    if (col <= "J" && row >= 3 && row <= lastItem) list.push("framed");
    if (row == 3) list.push("title");
    if (row >= firstItem && row <= lastItem) {
        if (col == "A") list.push("course");
        if (col == "B") list.push("food");
        if (col == "E" || col == "I") list.push("calc");
    }
    return list.join(" ");
}

let html = `<thead><tr><th class="col-head"><svg width="16" height="16"><path d="M16 0v16H0z" fill="#dcdcdc"/></svg></th>`;
letters.forEach((col) => {
    let cls = col == "A" ? "col-a" : col == "G" ? "col-g" : "col";
    html += `<th class="${cls}">${col}</th>`;
});
html += "</tr></thead><tbody>";

for (let row = 1; row <= rowCount; row++) {
    html += `<tr><th>${row}</th>`;
    letters.forEach((col) => {
        // J4 is merged down to the last item
        if (col == "J" && row > firstItem && row <= lastItem) return;
        let span = col == "J" && row == firstItem ? ` rowspan="${items.length}"` : "";
        html += `<td class="${classesFor(col, row)}"${span}>${cells[col + row] ?? ""}</td>`;
    });
    html += "</tr>";
}

table.innerHTML = html + "</tbody>";
```
